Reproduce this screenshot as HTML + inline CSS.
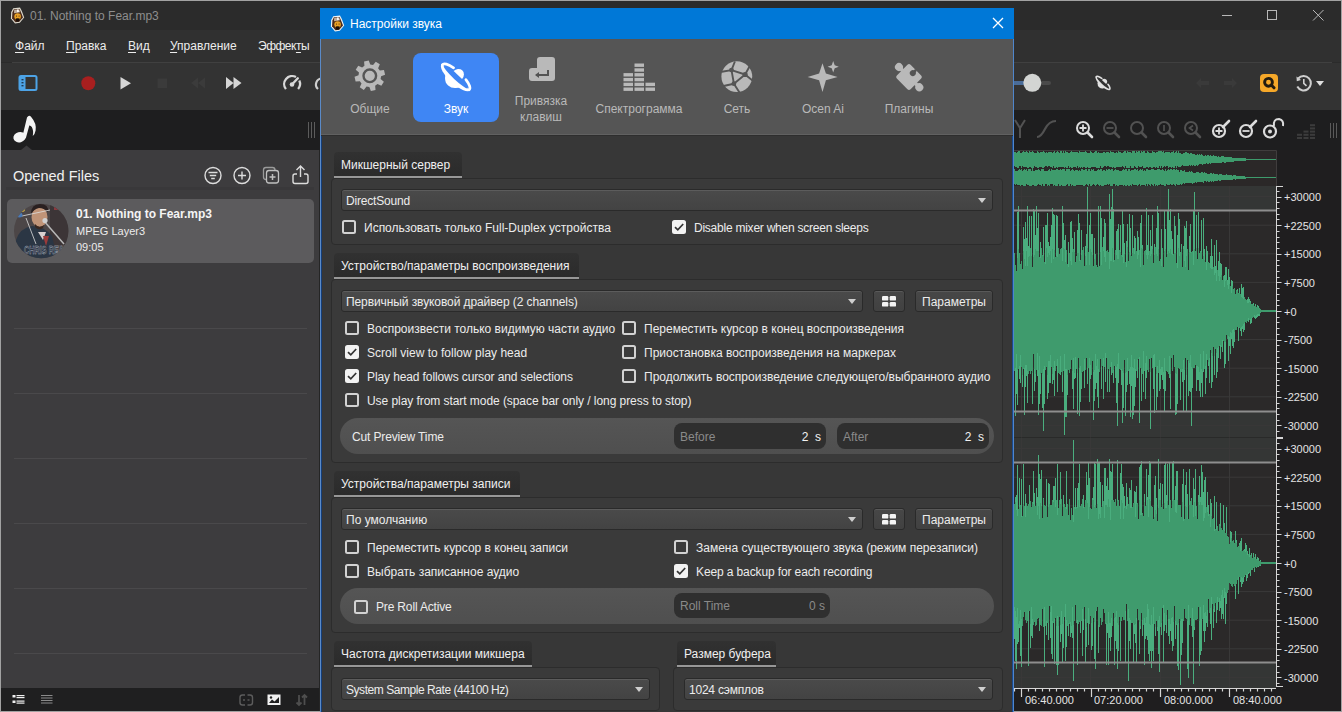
<!DOCTYPE html><html><head><meta charset="utf-8"><style>

*{box-sizing:border-box;margin:0;padding:0}
html,body{width:1342px;height:712px;overflow:hidden;background:#2b2b2b}
body{position:relative;font-family:"Liberation Sans",sans-serif;font-size:12px;color:#e8e8e8}
.a{position:absolute}
.t{position:absolute;white-space:nowrap;line-height:14px}
u{text-decoration:underline;text-underline-offset:2px}


.hd{position:absolute;height:26px;background:linear-gradient(#313131,#2b2b2b);border-radius:4px 4px 0 0;border-bottom:2px solid #979797;white-space:nowrap;color:#f0f0f0;line-height:27px;padding-left:7px}
.gb{position:absolute;background:#3a3a3a;border:1px solid #2c2c2c;border-radius:4px}
.cb{position:absolute;height:22px;background:linear-gradient(#4a4a4a,#434343);border:1px solid #2a2a2a;box-shadow:inset 0 1px 0 #5c5c5c;border-radius:3px;line-height:22px;padding-left:4px;white-space:nowrap;color:#ececec}
.cb:after{content:"";position:absolute;right:6px;top:8px;border-left:4px solid transparent;border-right:4px solid transparent;border-top:5px solid #cfcfcf}
.btn{position:absolute;height:22px;background:linear-gradient(#474747,#414141);border:1px solid #2a2a2a;box-shadow:inset 0 1px 0 #595959;border-radius:3px;line-height:23px;text-align:center;color:#ececec}
.ck{position:absolute;width:14px;height:14px;border:2px solid #d2d2d2;border-radius:2.5px}
.ck.on{background:#f2f2f2;border-color:#f2f2f2}
.ck.on svg{position:absolute;left:-1px;top:-1px}
.lb{position:absolute;white-space:nowrap;line-height:14px;color:#ececec}
.pill{position:absolute;background:linear-gradient(#555555,#4f4f4f);border-radius:18px}
.fld{position:absolute;background:#2f2f2f;border-radius:8px;height:26px;line-height:28px}
.fld .ph{position:absolute;left:6px;top:0;color:#8a8a8a}
.fld .v{position:absolute;right:5px;top:0;color:#f2f2f2}
.tl{position:absolute;white-space:nowrap;line-height:14px;color:#b4b4b4;text-align:center;width:100px}

</style></head><body>
<div class="a" style="left:1px;top:1px;width:1340px;height:29px;background:#2b2b2b"></div>
<svg class="a" style="left:9.5px;top:6.5px" width="15" height="17" viewBox="0 0 15 17"><path d="M3.2 1.2 L10 0.6 L11.8 4 L14.2 10.5 L9.8 15.8 L5 16.4 L0.9 11.6 L1.2 5 Z" fill="#dcd8cc"/><path d="M3.9 2.3 L9.5 1.9 L10.9 5 L13 10.6 L9.2 14.8 L5.4 15.2 L2.1 11.3 L2.4 5.4 Z" fill="#4a2a1a"/><path d="M4.2 2.8 L9.2 2.5 L10.2 5.2 L4 6.2 Z" fill="#bfae9e"/><path d="M7 2.6 L8.6 2.5 L8.8 5 L7.2 5.2 Z" fill="#ffffff"/><ellipse cx="7.6" cy="9.6" rx="3.3" ry="3.3" fill="#e6a026"/><rect x="6" y="8.6" width="1" height="1" fill="#5a3010"/><rect x="8.6" y="8.6" width="1" height="1" fill="#5a3010"/><path d="M5.8 11.6 Q7.6 11 9.6 11.6 L9.2 14.6 L6.4 14.8 Z" fill="#1a0e08"/></svg>
<div class="t" style="left:30px;top:9px;color:#8e8e8e">01. Nothing to Fear.mp3</div>
<svg class="a" style="left:1215px;top:5px" width="115" height="20" viewBox="1215 5 115 20"><path d="M1222 15.5 H1232" stroke="#b8b8b8" stroke-width="1"/><rect x="1267.5" y="10.5" width="9" height="9" fill="none" stroke="#b8b8b8" stroke-width="1"/><path d="M1313 10 L1323.5 20.5 M1323.5 10 L1313 20.5" stroke="#b8b8b8" stroke-width="1"/></svg>
<div class="a" style="left:1px;top:30px;width:1340px;height:32px;background:#303030"></div>
<div class="t" style="left:15px;top:39px;color:#ececec;letter-spacing:0px"><u>Ф</u>айл</div>
<div class="t" style="left:66px;top:39px;color:#ececec;letter-spacing:0px"><u>П</u>равка</div>
<div class="t" style="left:128px;top:39px;color:#ececec;letter-spacing:0px"><u>В</u>ид</div>
<div class="t" style="left:170px;top:39px;color:#ececec;letter-spacing:0px"><u>У</u>правление</div>
<div class="t" style="left:258px;top:39px;color:#ececec;letter-spacing:-0.5px">Эффек<u>т</u>ы</div>
<div class="a" style="left:12px;top:62px;width:1320px;height:1px;background:#404040"></div>
<div class="a" style="left:1px;top:63px;width:1340px;height:47px;background:#333333"></div>
<svg class="a" style="left:0;top:60px" width="330" height="50" viewBox="0 60 330 50"><rect x="19.5" y="76" width="17" height="14" rx="1.5" fill="none" stroke="#4da3e6" stroke-width="2"/><rect x="19.5" y="76" width="6" height="14" fill="#4da3e6"/><rect x="21.5" y="79" width="2" height="1.4" fill="#1d3a55"/><rect x="21.5" y="82" width="2" height="1.4" fill="#1d3a55"/><rect x="21.5" y="85" width="2" height="1.4" fill="#1d3a55"/><circle cx="88.3" cy="83.3" r="7" fill="#a81f1f"/><path d="M120.5 77 L131 83.2 L120.5 89.5 Z" fill="#d6d6d6"/><rect x="157.5" y="78.5" width="9.5" height="9.5" fill="#3b3b3b"/><path d="M205 77.5 L198 83 L205 88.5 Z M198 77.5 L191 83 L198 88.5 Z" fill="#3b3b3b"/><path d="M226 77 L233.5 83 L226 89 Z M233.5 77 L241.5 83 L233.5 89 Z" fill="#d6d6d6"/><path d="M285.9 89.1 A8 8 0 0 1 296 77.1" fill="none" stroke="#d8d8d8" stroke-width="2.3"/><path d="M299.3 80.6 A8 8 0 0 1 298.1 89.1" fill="none" stroke="#d8d8d8" stroke-width="2.3"/><path d="M292 84.5 L297.8 78.3" stroke="#d8d8d8" stroke-width="2.4" stroke-linecap="round"/><circle cx="292" cy="84.5" r="2.3" fill="#d8d8d8"/><path d="M322 78.5 A6 6 0 0 0 318 89" fill="none" stroke="#cfcfcf" stroke-width="2.2"/></svg>
<div class="a" style="left:1px;top:110px;width:1340px;height:40px;background:#1e1e1f"></div>
<svg class="a" style="left:0;top:110px" width="50" height="40" viewBox="0 110 50 40"><ellipse cx="19.6" cy="137.2" rx="6.3" ry="5.1" transform="rotate(-15 19.6 137.2)" fill="#f4f4f4"/><path d="M22.3 137 L27 117.5 Q29 114.5 31.2 117 Q36.8 123.5 35.6 130.5 Q35 134 32.8 136 Q33.8 130.5 31.8 127 Q30.6 125.2 29.3 125.5 L25.9 138 Z" fill="#f4f4f4"/></svg>
<svg class="a" style="left:21px;top:145px" width="11" height="5" viewBox="0 0 11 5"><path d="M0 5 L5.5 0.5 L11 5 Z" fill="#3d3c3e"/></svg>
<svg class="a" style="left:306px;top:122px" width="12" height="17" viewBox="0 0 12 17"><path d="M2.5 0 V16 M5.5 0 V16 M8.5 0 V16" stroke="#5c5c5c" stroke-width="1"/></svg>
<div class="a" style="left:1px;top:150px;width:318px;height:538px;background:#3d3c3e"></div>
<div class="a" style="left:319px;top:150px;width:1px;height:561px;background:#252525"></div>
<div class="t" style="left:13px;top:167px;font-size:14.5px;line-height:18px;color:#f0f0f0">Opened Files</div>
<div class="a" style="left:6px;top:187px;width:308px;height:3px;background:#39383a"></div>
<svg class="a" style="left:195px;top:160px" width="125" height="30" viewBox="195 160 125 30"><circle cx="213" cy="175.5" r="8" fill="none" stroke="#dcdcdc" stroke-width="1.4"/><path d="M208.5 172.5 H217.5 M209.8 175.5 H216.2 M211.2 178.5 H214.8" stroke="#dcdcdc" stroke-width="1.3"/><circle cx="242" cy="175.5" r="8" fill="none" stroke="#dcdcdc" stroke-width="1.4"/><path d="M238 175.5 H246 M242 171.5 V179.5" stroke="#dcdcdc" stroke-width="1.4"/><rect x="263.5" y="167.5" width="11.5" height="12" rx="2.5" fill="none" stroke="#9a9a9a" stroke-width="1.3"/><rect x="266.5" y="170.5" width="12" height="12.5" rx="2.5" fill="#3d3c3e" stroke="#c0c0c0" stroke-width="1.3"/><path d="M269.5 177 H275.5 M272.5 174 V180" stroke="#c0c0c0" stroke-width="1.5"/><path d="M297 174 H295 Q293 174 293 176 V181.5 Q293 183.5 295 183.5 H306 Q308 183.5 308 181.5 V176 Q308 174 306 174 H304" fill="none" stroke="#dcdcdc" stroke-width="1.4"/><path d="M300.5 177 V166.5 M296.5 170 L300.5 166 L304.5 170" fill="none" stroke="#dcdcdc" stroke-width="1.4"/></svg>
<div class="a" style="left:7px;top:199px;width:307px;height:64px;background:#5c5b5d;border-radius:5px"></div>
<svg class="a" style="left:0;top:190px" width="80" height="80" viewBox="0 190 80 80"><defs><clipPath id="av"><circle cx="41.2" cy="231" r="27.2"/></clipPath></defs><g clip-path="url(#av)"><rect x="0" y="190" width="80" height="80" fill="#4c4647"/><rect x="50" y="200" width="30" height="45" fill="#3c3537"/><path d="M14 262 L16 240 Q20 228 32 226 Q44 226 52 236 L58 262 Z" fill="#2b3644"/><path d="M38 232 L43 240 L46 232 Z" fill="#d8d0d0"/><path d="M43 236 L46 246 L49 236 Z" fill="#9a3a3a"/><ellipse cx="39.5" cy="217" rx="8" ry="10" fill="#c09478"/><path d="M31 214 Q31 204 40 204 Q49 204 48 212 Q44 208 39 208 Q34 209 31 214 Z" fill="#2a2020"/><path d="M35 224 Q39 229 44 225 L43 228 Q39 231 35 227 Z" fill="#3a2820"/><path d="M44 221 L64 244" stroke="#b8b8b8" stroke-width="1.5"/><circle cx="45" cy="220.5" r="2.6" fill="#d0d0d0"/><path d="M22 216 L50 210 M26 218 L36 244" stroke="#e0e0e0" stroke-width="0.8"/><ellipse cx="21.5" cy="209.5" rx="3.5" ry="2.5" fill="#d8b440"/><ellipse cx="19.5" cy="215" rx="3" ry="2.5" fill="#4a7ab8"/><rect x="54" y="207" width="5" height="3" fill="#8a3a40"/><text x="24" y="253.5" font-family="Liberation Sans" font-size="10" font-weight="bold" fill="#2c3440" stroke="#b0b8c4" stroke-width="0.35" textLength="40" lengthAdjust="spacingAndGlyphs">CHRIS REA</text></g></svg>
<div class="t" style="left:76px;top:207px;font-weight:bold;color:#f4f4f4">01. Nothing to Fear.mp3</div>
<div class="t" style="left:76px;top:224px;font-size:11px;color:#ececec">MPEG Layer3</div>
<div class="t" style="left:76px;top:240px;font-size:11px;color:#ececec">09:05</div>
<div class="a" style="left:14px;top:328px;width:293px;height:1px;background:#4a494b"></div>
<div class="a" style="left:14px;top:393px;width:293px;height:1px;background:#4a494b"></div>
<div class="a" style="left:14px;top:458px;width:293px;height:1px;background:#4a494b"></div>
<div class="a" style="left:14px;top:523px;width:293px;height:1px;background:#4a494b"></div>
<div class="a" style="left:14px;top:588px;width:293px;height:1px;background:#4a494b"></div>
<div class="a" style="left:14px;top:653px;width:293px;height:1px;background:#4a494b"></div>
<div class="a" style="left:1px;top:688px;width:318px;height:23px;background:#1f1f20"></div>
<svg class="a" style="left:0;top:688px" width="320" height="23" viewBox="0 688 320 23"><rect x="12.5" y="695" width="3" height="2.5" fill="#f0f0f0"/><rect x="12.5" y="700.5" width="3" height="2.5" fill="#f0f0f0"/><rect x="16.5" y="695" width="8" height="1.2" fill="#f0f0f0"/><rect x="16.5" y="697" width="8" height="1.2" fill="#f0f0f0"/><rect x="16.5" y="700.5" width="8" height="1.2" fill="#f0f0f0"/><rect x="16.5" y="702.5" width="8" height="1.2" fill="#f0f0f0"/><path d="M41 695.5 H52.5 M41 698 H52.5 M41 700.5 H52.5 M41 703 H52.5" stroke="#8a8a8a" stroke-width="1"/><rect x="240" y="695" width="12.5" height="10" rx="2.5" fill="none" stroke="#5c5c5c" stroke-width="1.4"/><path d="M243 700 H249.5" stroke="#5c5c5c" stroke-width="1.4"/><rect x="245" y="694" width="2.5" height="12" fill="#1f1f20"/><rect x="267.5" y="694.5" width="13" height="10.5" fill="#f0f0f0"/><path d="M269 703 L272 699.5 L274.5 701.5 L279 697 V703 Z" fill="#1f1f20"/><circle cx="271" cy="697.5" r="1.2" fill="#1f1f20"/><path d="M299 695 V705 M296.5 702.5 L299 705 L301.5 702.5 M304.5 705 V695 M302 697.5 L304.5 695 L307 697.5" fill="none" stroke="#4e4e4e" stroke-width="1.8"/></svg>
<svg class="a" style="left:1014px;top:62px" width="328" height="88" viewBox="1014 62 328 88"><rect x="1014" y="81" width="18" height="4" fill="#4a6c98"/><rect x="1040" y="81" width="11" height="4" rx="2" fill="#4a4a4a"/><circle cx="1032.3" cy="82.8" r="9" fill="#d3d5d3"/><path d="M1196 83 L1201 78 V81 H1209 V85 H1201 V88 Z" fill="#3a3a3a"/><path d="M1237 83 L1232 78 V81 H1224 V85 H1232 V88 Z" fill="#3a3a3a"/><rect x="1260" y="74" width="18" height="18" rx="4" fill="#f6a829"/><circle cx="1268.5" cy="82.3" r="3.9" fill="none" stroke="#231c10" stroke-width="2.9"/><path d="M1271.5 85.3 L1274 87.8" stroke="#231c10" stroke-width="3" stroke-linecap="round"/><path d="M1298.2 78.5 A7.2 7.2 0 1 1 1297.3 86.5" fill="none" stroke="#cfcfcf" stroke-width="2"/><path d="M1296.5 76.5 L1296.8 81.3 L1301 80 Z" fill="#cfcfcf"/><path d="M1303.8 79 V83.3 L1306.5 85.8" fill="none" stroke="#cfcfcf" stroke-width="1.6"/><path d="M1316 81 H1324 L1320 86 Z" fill="#e0e0e0"/></svg>
<svg class="a" style="left:1093px;top:72.7px" width="20" height="20" viewBox="-20 -20 40 40"><g transform="rotate(43)"><path d="M-19.6 0 A19.6 7 0 0 0 19.6 0 Z" fill="#e2e2e2"/><path d="M-10.5 0 A10.5 11.5 0 0 0 10.5 0 Z" fill="#e2e2e2"/><path d="M-18.3 0.3 A18.3 5.6 0 0 1 -8 -5.04" fill="none" stroke="#e2e2e2" stroke-width="3.2" stroke-linecap="round"/><path d="M9 -4.88 A18.3 5.6 0 0 1 18.3 0.3" fill="none" stroke="#e2e2e2" stroke-width="3.2" stroke-linecap="round"/><ellipse cx="0" cy="0.3" rx="16.3" ry="2.2" fill="#333333"/><path d="M-5.8 -2.9 A5.8 6.4 0 0 1 5.8 -2.9 Z" fill="#e2e2e2"/></g></svg>
<svg class="a" style="left:1014px;top:110px" width="328" height="40" viewBox="1014 110 328 40"><path d="M1015 120 L1020 128 L1025 120 M1020 128 V138" fill="none" stroke="#525252" stroke-width="2"/><path d="M1037 137 Q1041 137 1045 129 Q1049 121 1056 121" fill="none" stroke="#525252" stroke-width="2.2"/><circle cx="1083" cy="128" r="6" fill="none" stroke="#dcdcdc" stroke-width="2"/><path d="M1087.5 132.5 L1092 137" stroke="#dcdcdc" stroke-width="2.6" stroke-linecap="round"/><path d="M1079.5 128 H1086.5 M1083 124.5 V131.5" stroke="#dcdcdc" stroke-width="1.8"/><circle cx="1110" cy="128" r="6" fill="none" stroke="#525252" stroke-width="2"/><path d="M1114.5 132.5 L1119 137" stroke="#525252" stroke-width="2.6" stroke-linecap="round"/><path d="M1106.5 128 H1113.5" stroke="#525252" stroke-width="1.8"/><circle cx="1137" cy="128" r="6" fill="none" stroke="#525252" stroke-width="2"/><path d="M1141.5 132.5 L1146 137" stroke="#525252" stroke-width="2.6" stroke-linecap="round"/><circle cx="1164" cy="128" r="6" fill="none" stroke="#525252" stroke-width="2"/><path d="M1168.5 132.5 L1173 137" stroke="#525252" stroke-width="2.6" stroke-linecap="round"/><path d="M1164 125 V131" stroke="#525252" stroke-width="1.6"/><circle cx="1191" cy="128" r="6" fill="none" stroke="#525252" stroke-width="2"/><path d="M1195.5 132.5 L1200 137" stroke="#525252" stroke-width="2.6" stroke-linecap="round"/><path d="M1193 125.5 L1189.5 128 L1193 130.5" fill="none" stroke="#525252" stroke-width="1.6"/><circle cx="1219" cy="131" r="6" fill="none" stroke="#dcdcdc" stroke-width="2.2"/><path d="M1223 127 L1229 121" stroke="#dcdcdc" stroke-width="2.6" stroke-linecap="round"/><path d="M1215.5 131 H1222.5 M1219 127.5 V134.5" stroke="#dcdcdc" stroke-width="1.8"/><circle cx="1246" cy="131" r="6" fill="none" stroke="#dcdcdc" stroke-width="2.2"/><path d="M1250 127 L1256 121" stroke="#dcdcdc" stroke-width="2.6" stroke-linecap="round"/><path d="M1242.5 131 H1249.5" stroke="#dcdcdc" stroke-width="1.8"/><circle cx="1270" cy="131.5" r="6" fill="none" stroke="#dcdcdc" stroke-width="2.2"/><circle cx="1270" cy="131.5" r="2" fill="#dcdcdc"/><path d="M1274 126 Q1273 119 1279 119 Q1284 120 1283 126" fill="none" stroke="#dcdcdc" stroke-width="2"/><rect x="1297.0" y="137.0" width="5" height="2" fill="#3c3c3c"/><rect x="1297.0" y="133.8" width="5" height="2" fill="#3c3c3c"/><rect x="1303.5" y="137.0" width="5" height="2" fill="#3c3c3c"/><rect x="1303.5" y="133.8" width="5" height="2" fill="#3c3c3c"/><rect x="1303.5" y="130.6" width="5" height="2" fill="#3c3c3c"/><rect x="1310.0" y="137.0" width="5" height="2" fill="#3c3c3c"/><rect x="1310.0" y="133.8" width="5" height="2" fill="#3c3c3c"/><rect x="1310.0" y="130.6" width="5" height="2" fill="#3c3c3c"/><rect x="1310.0" y="127.4" width="5" height="2" fill="#3c3c3c"/><rect x="1310.0" y="124.2" width="5" height="2" fill="#3c3c3c"/><path d="M1330.5 123 V138 M1333.5 123 V138 M1336.5 123 V138" stroke="#5a5a5a" stroke-width="1"/></svg>
<div class="a" style="left:1014px;top:150px;width:327px;height:561px;background:#1f1e1f"></div>
<svg class="a" style="left:1014px;top:150px" width="327" height="561" viewBox="1014 150 327 561"><rect x="1014" y="150" width="262" height="36" fill="#2b2828"/><path d="M1014 150.5 H1276.5 V186" fill="none" stroke="#403d3d" stroke-width="1"/><path d="M1014.5 152.2V166.4M1014.5 169.4V184.2M1015.5 151.7V166.9M1015.5 170.9V185.3M1016.5 152.9V167.1M1016.5 170.8V184.2M1017.5 151.9V168.1M1017.5 170.7V184.6M1018.5 151.4V168.4M1018.5 169.6V185.0M1019.5 150.6V166.1M1019.5 168.9V184.7M1020.5 152.6V166.3M1020.5 170.2V186.0M1021.5 152.5V167.5M1021.5 169.4V184.9M1022.5 151.6V166.2M1022.5 170.9V184.5M1023.5 151.3V167.1M1023.5 170.2V185.5M1024.5 151.9V166.7M1024.5 169.0V185.7M1025.5 152.4V167.4M1025.5 169.7V186.2M1026.5 151.2V166.7M1026.5 168.5V184.3M1027.5 152.0V167.9M1027.5 170.6V185.2M1028.5 152.9V167.7M1028.5 169.1V185.4M1029.5 150.8V166.8M1029.5 169.3V185.5M1030.5 151.6V167.1M1030.5 168.9V186.4M1031.5 151.8V167.7M1031.5 170.8V185.8M1032.5 151.4V168.5M1032.5 168.9V184.7M1033.5 152.0V167.7M1033.5 170.9V185.2M1034.5 152.6V166.3M1034.5 170.9V185.9M1035.5 152.7V166.6M1035.5 170.0V186.2M1036.5 152.8V167.1M1036.5 169.6V186.2M1037.5 151.0V168.2M1037.5 170.3V185.0M1038.5 152.1V168.2M1038.5 168.6V184.4M1039.5 152.6V166.6M1039.5 170.4V185.2M1040.5 151.5V166.7M1040.5 171.0V185.0M1041.5 152.1V167.4M1041.5 168.6V185.7M1042.5 151.7V167.5M1042.5 169.3V184.1M1043.5 150.8V167.9M1043.5 168.8V186.0M1044.5 152.0V167.0M1044.5 170.7V185.6M1045.5 152.8V166.2M1045.5 170.5V184.4M1046.5 152.1V166.1M1046.5 171.0V184.4M1047.5 152.7V166.9M1047.5 170.9V186.2M1048.5 151.5V166.4M1048.5 170.4V184.9M1049.5 152.1V166.3M1049.5 168.9V186.5M1050.5 151.8V167.2M1050.5 170.8V184.3M1051.5 152.1V166.7M1051.5 168.9V184.4M1052.5 152.9V168.4M1052.5 169.7V184.4M1053.5 151.6V166.1M1053.5 169.7V186.4M1054.5 150.8V167.7M1054.5 170.3V184.9M1055.5 152.6V167.9M1055.5 169.7V185.9M1056.5 152.2V166.6M1056.5 169.0V186.5M1057.5 150.9V168.0M1057.5 169.0V185.8M1058.5 152.4V167.3M1058.5 170.1V184.1M1059.5 152.9V166.7M1059.5 170.4V185.7M1060.5 150.6V167.1M1060.5 168.7V186.5M1061.5 150.6V166.9M1061.5 170.4V184.6M1062.5 152.5V166.5M1062.5 169.4V186.3M1063.5 150.9V167.2M1063.5 169.4V186.0M1064.5 152.8V167.7M1064.5 168.7V186.0M1065.5 151.1V167.2M1065.5 170.6V186.0M1066.5 152.2V168.0M1066.5 168.6V185.0M1067.5 152.0V168.4M1067.5 169.2V184.4M1068.5 152.7V166.4M1068.5 168.7V186.0M1069.5 152.6V168.1M1069.5 168.5V185.6M1070.5 152.1V167.4M1070.5 170.7V184.0M1071.5 150.6V167.6M1071.5 169.7V186.3M1072.5 151.9V168.2M1072.5 168.9V184.5M1073.5 152.4V166.7M1073.5 170.4V185.5M1074.5 152.4V167.0M1074.5 170.7V186.3M1075.5 152.1V167.1M1075.5 169.5V186.3M1076.5 151.9V168.3M1076.5 169.7V185.3M1077.5 151.7V166.0M1077.5 169.9V184.5M1078.5 153.0V168.0M1078.5 170.6V185.2M1079.5 151.2V167.4M1079.5 170.2V185.3M1080.5 151.6V168.0M1080.5 170.7V185.4M1081.5 152.4V166.7M1081.5 169.1V185.3M1082.5 151.6V167.9M1082.5 168.7V185.1M1083.5 151.5V167.3M1083.5 169.7V185.7M1084.5 151.9V167.3M1084.5 169.8V186.4M1085.5 151.3V168.2M1085.5 168.6V184.6M1086.5 151.6V168.4M1086.5 168.9V184.3M1087.5 152.7V167.1M1087.5 170.8V184.6M1088.5 152.8V167.7M1088.5 169.0V186.2M1089.5 152.6V167.8M1089.5 169.3V184.4M1090.5 150.8V168.4M1090.5 170.5V186.4M1091.5 152.0V167.2M1091.5 168.5V186.1M1092.5 152.6V167.1M1092.5 169.7V184.8M1093.5 152.5V166.8M1093.5 169.2V184.0M1094.5 151.6V167.1M1094.5 171.0V184.8M1095.5 151.4V167.3M1095.5 170.8V186.5M1096.5 151.0V168.4M1096.5 170.7V184.7M1097.5 152.9V167.9M1097.5 170.3V184.3M1098.5 151.9V168.3M1098.5 169.0V184.6M1099.5 152.6V168.3M1099.5 169.6V185.8M1100.5 152.8V166.1M1100.5 169.3V185.1M1101.5 152.8V168.3M1101.5 169.4V186.0M1102.5 152.8V168.1M1102.5 170.8V186.2M1103.5 151.9V166.8M1103.5 169.6V186.3M1104.5 152.3V166.3M1104.5 169.7V184.6M1105.5 152.7V166.4M1105.5 170.9V184.5M1106.5 152.2V166.8M1106.5 169.1V184.7M1107.5 151.7V166.4M1107.5 170.1V184.0M1108.5 152.4V166.0M1108.5 169.2V185.4M1109.5 152.5V167.2M1109.5 168.7V184.3M1110.5 151.0V167.1M1110.5 169.8V186.1M1111.5 152.0V167.3M1111.5 169.3V186.5M1112.5 152.1V168.1M1112.5 169.2V185.6M1113.5 152.0V166.9M1113.5 170.9V184.3M1114.5 152.8V167.9M1114.5 170.4V184.4M1115.5 152.8V168.1M1115.5 168.8V185.7M1116.5 152.3V166.6M1116.5 170.3V185.1M1117.5 152.6V167.1M1117.5 170.3V186.4M1118.5 150.6V167.4M1118.5 170.4V186.4M1119.5 152.2V166.9M1119.5 171.0V185.0M1120.5 151.8V167.3M1120.5 170.5V185.3M1121.5 153.0V166.7M1121.5 170.8V185.0M1122.5 152.9V166.1M1122.5 170.2V184.6M1123.5 151.5V167.3M1123.5 169.1V185.6M1124.5 151.2V168.2M1124.5 170.0V184.8M1125.5 150.5V166.4M1125.5 169.2V185.6M1126.5 152.9V168.1M1126.5 168.8V185.6M1127.5 151.2V168.0M1127.5 170.7V185.3M1128.5 151.7V168.1M1128.5 169.0V186.1M1129.5 151.5V168.2M1129.5 169.3V185.7M1130.5 152.4V166.1M1130.5 170.7V184.9M1131.5 152.7V168.1M1131.5 169.6V185.6M1132.5 151.4V167.7M1132.5 169.8V184.0M1133.5 151.0V167.9M1133.5 169.7V185.3M1134.5 151.4V166.2M1134.5 169.2V184.6M1135.5 152.8V166.7M1135.5 169.2V184.5M1136.5 151.2V168.4M1136.5 169.8V185.0M1137.5 151.8V167.7M1137.5 169.1V185.5M1138.5 151.4V166.2M1138.5 170.6V184.6M1139.5 151.1V166.8M1139.5 169.6V184.0M1140.5 152.8V166.7M1140.5 169.3V185.7M1141.5 151.3V166.7M1141.5 169.7V185.2M1142.5 151.8V166.3M1142.5 168.8V184.5M1143.5 150.6V168.3M1143.5 171.0V185.1M1144.5 151.0V168.4M1144.5 169.9V184.7M1145.5 152.5V168.4M1145.5 170.5V185.5M1146.5 152.6V167.3M1146.5 168.6V184.3M1147.5 150.9V167.3M1147.5 168.8V185.8M1148.5 152.4V168.2M1148.5 169.8V184.1M1149.5 153.0V167.2M1149.5 169.9V184.8M1150.5 152.6V166.9M1150.5 170.2V186.1M1151.5 153.0V167.9M1151.5 168.9V184.3M1152.5 150.7V167.8M1152.5 168.7V184.7M1153.5 152.1V167.0M1153.5 168.5V185.5M1154.5 152.1V167.1M1154.5 170.3V184.1M1155.5 152.7V168.1M1155.5 170.3V186.3M1156.5 152.4V166.7M1156.5 169.7V184.5M1157.5 152.1V168.4M1157.5 168.8V186.0M1158.5 151.4V168.3M1158.5 168.6V185.4M1159.5 151.2V166.1M1159.5 169.2V185.1M1160.5 151.1V167.6M1160.5 170.3V184.1M1161.5 150.7V166.3M1161.5 169.8V184.9M1162.5 152.3V167.8M1162.5 168.6V184.7M1163.5 151.4V166.8M1163.5 169.6V185.0M1164.5 152.6V166.4M1164.5 170.5V186.3M1165.5 151.8V166.6M1165.5 168.7V186.5M1166.5 151.9V166.3M1166.5 170.5V184.2M1167.5 152.1V166.2M1167.5 170.4V184.6M1168.5 151.6V168.2M1168.5 169.1V185.0M1169.5 152.0V167.3M1169.5 170.1V184.8M1170.5 152.8V166.7M1170.5 168.6V184.3M1171.5 151.7V167.6M1171.5 168.8V184.5M1172.5 152.3V166.6M1172.5 170.0V185.1M1173.5 150.6V168.1M1173.5 168.8V184.1M1174.5 152.9V167.8M1174.5 168.8V185.2M1175.5 151.5V166.0M1175.5 170.0V186.3M1176.5 151.2V167.9M1176.5 168.8V184.4M1177.5 153.1V166.0M1177.5 170.1V185.3M1178.5 151.3V167.2M1178.5 169.9V185.3M1179.5 152.5V166.7M1179.5 171.5V185.2M1180.5 153.1V167.4M1180.5 170.2V184.0M1181.5 153.5V165.8M1181.5 170.4V184.8M1182.5 153.6V165.3M1182.5 170.7V184.4M1183.5 153.1V165.5M1183.5 170.7V183.0M1184.5 153.4V165.9M1184.5 170.1V184.3M1185.5 152.4V165.8M1185.5 171.7V183.3M1186.5 152.3V166.2M1186.5 171.6V182.8M1187.5 153.4V166.0M1187.5 171.5V183.2M1188.5 153.1V166.4M1188.5 172.0V182.6M1189.5 153.9V165.3M1189.5 171.2V182.9M1190.5 153.1V165.8M1190.5 171.7V182.8M1191.5 152.9V164.9M1191.5 171.2V182.7M1192.5 154.4V165.6M1192.5 172.2V183.9M1193.5 154.0V164.5M1193.5 172.5V182.9M1194.5 153.8V165.7M1194.5 172.7V182.7M1195.5 154.7V165.6M1195.5 172.8V182.1M1196.5 155.0V164.6M1196.5 171.6V183.4M1197.5 154.0V165.5M1197.5 171.6V182.4M1198.5 155.0V165.3M1198.5 172.1V181.8M1199.5 154.3V164.3M1199.5 172.8V182.2M1200.5 155.2V163.6M1200.5 173.0V182.1M1201.5 154.0V163.7M1201.5 172.0V181.8M1202.5 155.0V164.7M1202.5 172.3V182.1M1203.5 155.6V164.0M1203.5 173.1V182.7M1204.5 155.5V163.8M1204.5 172.4V181.3M1205.5 155.2V164.3M1205.5 172.7V181.3M1206.5 155.8V163.2M1206.5 172.6V181.5M1207.5 154.9V164.3M1207.5 173.5V181.4M1208.5 154.7V163.8M1208.5 173.7V181.9M1209.5 155.7V163.3M1209.5 174.1V181.9M1210.5 155.0V163.6M1210.5 173.0V180.9M1211.5 156.0V163.3M1211.5 173.0V181.9M1212.5 155.8V163.0M1212.5 173.8V181.3M1213.5 155.3V162.8M1213.5 173.4V181.5M1214.5 155.5V163.4M1214.5 173.8V180.9M1215.5 156.2V162.9M1215.5 173.6V180.6M1216.5 156.4V163.2M1216.5 174.3V180.5M1217.5 156.6V162.9M1217.5 174.3V181.4M1218.5 155.8V163.3M1218.5 174.5V180.3M1219.5 156.7V162.7M1219.5 174.1V180.6M1220.5 156.6V162.5M1220.5 174.3V180.8M1221.5 156.2V162.9M1221.5 174.3V180.2M1222.5 156.2V162.3M1222.5 174.5V180.3M1223.5 156.4V162.1M1223.5 174.9V180.1M1224.5 157.0V162.6M1224.5 174.6V180.1M1225.5 156.9V162.6M1225.5 174.8V180.0M1226.5 156.6V162.3M1226.5 174.4V179.8M1227.5 157.0V162.3M1227.5 174.7V180.4M1228.5 157.4V161.8M1228.5 175.3V179.7M1229.5 156.7V162.0M1229.5 174.8V179.8M1230.5 156.9V161.8M1230.5 175.4V180.0M1231.5 156.9V161.5M1231.5 175.2V179.8M1232.5 157.5V161.6M1232.5 175.6V179.5M1233.5 157.6V161.6M1233.5 175.3V179.4M1234.5 157.8V161.4M1234.5 175.4V179.3M1235.5 157.7V161.2M1235.5 175.4V179.5M1236.5 157.9V161.1M1236.5 175.7V179.4M1237.5 157.7V161.0M1237.5 175.9V179.4M1238.5 157.9V161.1M1238.5 175.9V179.4M1239.5 158.0V161.2M1239.5 176.0V179.1M1240.5 157.8V161.3M1240.5 176.0V178.9M1241.5 157.9V160.8M1241.5 176.3V179.2M1242.5 158.1V161.0M1242.5 176.2V179.1M1243.5 158.2V160.7M1243.5 176.4V178.8M1244.5 158.2V160.9M1244.5 176.4V178.8M1245.5 158.4V160.7M1245.5 176.5V178.6M1246.5 158.6V160.4M1246.5 176.6V178.4M1247.5 158.6V160.4M1247.5 176.6V178.4M1248.5 158.6V160.4M1248.5 176.6V178.4M1249.5 158.6V160.4M1249.5 176.6V178.4M1250.5 158.6V160.4M1250.5 176.6V178.4M1251.5 158.6V160.4M1251.5 176.6V178.4M1252.5 158.6V160.4M1252.5 176.6V178.4M1253.5 158.6V160.4M1253.5 176.6V178.4M1254.5 158.6V160.4M1254.5 176.6V178.4M1255.5 158.6V160.4M1255.5 176.6V178.4M1256.5 158.6V160.4M1256.5 176.6V178.4M1257.5 158.6V160.4M1257.5 176.6V178.4M1258.5 158.6V160.4M1258.5 176.6V178.4M1259.5 158.6V160.4M1259.5 176.6V178.4M1260.5 158.6V160.4M1260.5 176.6V178.4M1261.5 158.6V160.4M1261.5 176.6V178.4M1262.5 158.6V160.4M1262.5 176.6V178.4M1263.5 158.6V160.4M1263.5 176.6V178.4M1264.5 158.6V160.4M1264.5 176.6V178.4M1265.5 158.6V160.4M1265.5 176.6V178.4M1266.5 158.6V160.4M1266.5 176.6V178.4M1267.5 158.6V160.4M1267.5 176.6V178.4M1268.5 158.6V160.4M1268.5 176.6V178.4M1269.5 158.6V160.4M1269.5 176.6V178.4M1270.5 158.6V160.4M1270.5 176.6V178.4M1271.5 158.6V160.4M1271.5 176.6V178.4M1272.5 158.6V160.4M1272.5 176.6V178.4M1273.5 158.6V160.4M1273.5 176.6V178.4M1274.5 158.6V160.4M1274.5 176.6V178.4M1275.5 158.6V160.4M1275.5 176.6V178.4" stroke="#3e9b6c" stroke-width="1" shape-rendering="crispEdges"/><rect x="1014" y="186" width="262" height="251.5" fill="#343635"/><rect x="1014" y="210.5" width="262" height="201.0" fill="#2b2929"/><path d="M1014 196.6H1276" stroke="#3a3939" stroke-width="1"/><path d="M1014 225.2H1276" stroke="#3a3939" stroke-width="1"/><path d="M1014 253.8H1276" stroke="#3a3939" stroke-width="1"/><path d="M1014 282.4H1276" stroke="#3a3939" stroke-width="1"/><path d="M1014 311.0H1276" stroke="#3a3939" stroke-width="1"/><path d="M1014 339.6H1276" stroke="#3a3939" stroke-width="1"/><path d="M1014 368.2H1276" stroke="#3a3939" stroke-width="1"/><path d="M1014 396.8H1276" stroke="#3a3939" stroke-width="1"/><path d="M1014 425.4H1276" stroke="#3a3939" stroke-width="1"/><path d="M1021.5 186V437.5" stroke="#393838" stroke-width="1"/><path d="M1090.5 186V437.5" stroke="#393838" stroke-width="1"/><path d="M1160.5 186V437.5" stroke="#393838" stroke-width="1"/><path d="M1229.5 186V437.5" stroke="#393838" stroke-width="1"/><rect x="1014" y="438" width="262" height="250" fill="#343635"/><rect x="1014" y="462.5" width="262" height="200.0" fill="#2b2929"/><path d="M1014 448.6H1276" stroke="#3a3939" stroke-width="1"/><path d="M1014 477.2H1276" stroke="#3a3939" stroke-width="1"/><path d="M1014 505.8H1276" stroke="#3a3939" stroke-width="1"/><path d="M1014 534.4H1276" stroke="#3a3939" stroke-width="1"/><path d="M1014 563.0H1276" stroke="#3a3939" stroke-width="1"/><path d="M1014 591.6H1276" stroke="#3a3939" stroke-width="1"/><path d="M1014 620.2H1276" stroke="#3a3939" stroke-width="1"/><path d="M1014 648.8H1276" stroke="#3a3939" stroke-width="1"/><path d="M1014 677.4H1276" stroke="#3a3939" stroke-width="1"/><path d="M1021.5 438V688" stroke="#393838" stroke-width="1"/><path d="M1090.5 438V688" stroke="#393838" stroke-width="1"/><path d="M1160.5 438V688" stroke="#393838" stroke-width="1"/><path d="M1229.5 438V688" stroke="#393838" stroke-width="1"/><path d="M1015.5 366.0V416.3M1016.5 352.0V393.5M1017.5 211.7V260.3M1017.5 367.6V404.7M1018.5 205.8V251.3M1019.5 363.7V378.7M1020.5 353.2V383.0M1022.5 372.9V387.4M1023.5 226.7V253.0M1024.5 238.7V261.3M1024.5 365.5V414.9M1025.5 221.9V268.1M1025.5 362.7V387.3M1026.5 238.4V253.4M1026.5 362.6V375.7M1027.5 205.8V268.3M1027.5 368.7V402.6M1028.5 246.1V258.8M1029.5 216.0V258.2M1031.5 216.4V258.2M1032.5 370.5V404.3M1033.5 209.0V258.9M1034.5 210.0V257.0M1034.5 367.3V391.1M1035.5 235.4V250.6M1035.5 371.5V382.1M1036.5 205.8V252.7M1037.5 227.9V253.3M1037.5 351.3V376.0M1038.5 213.1V252.7M1038.5 367.5V415.3M1039.5 353.7V404.3M1040.5 241.5V259.8M1040.5 372.1V394.0M1042.5 372.0V408.2M1043.5 226.5V258.2M1043.5 367.4V431.0M1044.5 364.4V404.0M1045.5 225.0V266.4M1046.5 225.0V250.0M1047.5 213.4V258.7M1047.5 372.7V398.6M1048.5 241.7V254.9M1048.5 359.3V393.2M1049.5 246.0V257.1M1049.5 359.4V383.2M1050.5 236.5V252.8M1050.5 352.9V383.3M1051.5 224.8V264.7M1052.5 208.2V250.9M1052.5 372.0V384.2M1053.5 213.8V261.2M1053.5 365.6V380.3M1054.5 215.2V252.2M1054.5 359.2V396.1M1056.5 214.9V258.0M1057.5 215.9V258.9M1057.5 357.1V392.0M1060.5 353.8V375.4M1062.5 206.1V262.9M1062.5 372.8V391.9M1063.5 223.1V249.9M1064.5 239.9V251.4M1064.5 352.1V434.6M1065.5 235.1V263.9M1065.5 366.7V417.1M1066.5 366.9V416.5M1067.5 372.7V394.7M1068.5 241.8V269.2M1070.5 222.1V263.4M1071.5 220.8V267.0M1072.5 238.2V253.5M1072.5 369.3V389.4M1073.5 356.2V409.0M1074.5 231.5V253.5M1074.5 370.5V379.1M1075.5 354.8V378.4M1077.5 230.2V254.6M1077.5 371.0V414.3M1078.5 213.5V255.4M1079.5 223.2V262.9M1079.5 365.8V415.6M1080.5 363.8V401.6M1081.5 230.4V256.8M1081.5 370.7V389.2M1084.5 357.2V388.0M1085.5 245.5V258.4M1086.5 233.9V267.3M1087.5 187.3V249.9M1087.5 366.4V384.3M1089.5 225.3V266.9M1089.5 356.3V401.8M1090.5 212.5V251.3M1090.5 363.0V378.5M1091.5 234.2V254.3M1092.5 233.9V256.9M1093.5 369.9V420.4M1094.5 238.3V261.2M1094.5 367.6V400.9M1095.5 352.4V388.8M1096.5 363.9V382.6M1097.5 356.7V396.5M1098.5 205.8V268.3M1098.5 367.1V408.2M1100.5 205.6V253.5M1101.5 217.7V267.4M1101.5 365.0V388.8M1103.5 236.9V253.0M1103.5 356.2V399.1M1104.5 219.3V258.7M1105.5 223.1V264.0M1105.5 351.1V382.3M1107.5 367.9V392.2M1109.5 193.6V270.9M1109.5 368.9V391.7M1110.5 219.0V263.4M1111.5 207.1V262.9M1111.5 359.5V375.0M1112.5 188.5V250.0M1113.5 209.3V264.3M1113.5 367.7V383.2M1115.5 364.3V378.3M1116.5 231.4V257.2M1116.5 365.4V402.8M1117.5 228.5V261.4M1117.5 361.6V426.0M1118.5 224.0V261.3M1118.5 350.8V382.8M1120.5 225.1V253.8M1121.5 367.4V384.9M1122.5 210.3V258.6M1122.5 369.0V423.4M1123.5 224.2V264.5M1123.5 371.0V408.2M1124.5 243.3V255.9M1125.5 370.9V415.8M1126.5 241.1V268.7M1126.5 370.4V391.5M1127.5 223.8V249.0M1127.5 355.7V385.2M1129.5 214.2V254.4M1129.5 366.9V384.0M1130.5 228.2V257.0M1130.5 365.1V416.7M1131.5 353.0V386.0M1132.5 214.8V255.4M1132.5 364.5V419.1M1133.5 366.3V414.8M1134.5 236.1V255.9M1134.5 357.1V405.5M1135.5 237.5V251.9M1135.5 367.1V387.3M1137.5 230.5V261.2M1137.5 358.2V377.5M1138.5 236.9V257.4M1139.5 355.4V423.4M1140.5 223.2V268.8M1141.5 214.6V249.5M1141.5 366.6V401.3M1142.5 245.4V250.7M1143.5 349.3V391.5M1145.5 360.8V398.7M1146.5 208.4V256.6M1146.5 354.0V377.7M1147.5 244.8V260.5M1148.5 215.1V256.5M1150.5 230.3V257.7M1150.5 369.9V428.8M1151.5 245.9V256.1M1152.5 214.9V250.6M1153.5 353.2V388.6M1154.5 244.3V256.7M1154.5 351.8V412.5M1156.5 228.4V256.2M1156.5 372.4V410.0M1157.5 205.7V257.8M1157.5 363.7V396.6M1158.5 213.3V250.9M1159.5 358.2V391.3M1160.5 366.5V389.1M1161.5 228.9V267.9M1161.5 364.8V375.4M1162.5 365.0V379.6M1163.5 370.1V388.5M1164.5 209.7V252.7M1164.5 355.9V411.0M1165.5 229.4V250.6M1165.5 369.9V391.2M1167.5 210.6V255.9M1168.5 189.2V252.5M1169.5 220.0V254.5M1169.5 354.2V378.1M1170.5 209.0V251.0M1170.5 371.6V408.5M1171.5 230.7V255.5M1172.5 238.7V256.9M1174.5 216.1V255.4M1175.5 225.7V254.8M1175.5 371.2V414.5M1176.5 371.7V414.2M1177.5 234.7V270.0M1177.5 367.2V404.2M1178.5 212.5V250.0M1179.5 218.9V258.1M1180.5 366.6V400.4M1181.5 244.2V250.7M1182.5 366.7V382.0M1183.5 246.3V250.9M1183.5 357.5V411.1M1184.5 225.7V263.2M1184.5 368.3V380.2M1185.5 228.0V268.5M1186.5 221.3V257.5M1186.5 372.7V411.3M1188.5 358.9V395.5M1189.5 236.2V254.0M1189.5 361.4V390.5M1190.5 224.0V254.5M1190.5 352.6V391.8M1191.5 365.3V425.8M1192.5 366.7V388.2M1193.5 210.9V266.9M1194.5 191.9V250.7M1196.5 215.4V249.8M1196.5 363.7V390.9M1197.5 363.7V379.8M1198.5 211.8V249.8M1198.5 365.1V380.2M1199.5 369.7V391.3M1200.5 352.3V396.8M1201.5 219.7V254.4M1201.5 366.6V383.2M1202.5 368.6V397.1M1203.5 217.7V257.8M1203.5 349.4V372.3M1204.5 248.6V262.1M1205.5 364.2V394.2M1206.5 245.7V271.5M1206.5 351.9V377.8M1207.5 250.5V264.4M1208.5 359.6V366.3M1209.5 356.0V382.5M1210.5 256.2V269.9M1211.5 239.1V270.6M1211.5 351.1V388.4M1212.5 256.4V270.8M1212.5 353.8V381.7M1214.5 244.5V277.4M1214.5 354.4V375.3M1215.5 265.7V275.3M1216.5 239.8V282.5M1216.5 351.1V378.1M1217.5 346.3V371.9M1218.5 261.1V277.5M1218.5 345.2V358.4M1219.5 252.2V283.1M1220.5 263.0V278.9M1220.5 342.9V358.6M1221.5 264.2V276.8M1222.5 337.7V352.2M1224.5 275.4V289.3M1224.5 339.7V368.2M1225.5 266.8V282.6M1225.5 339.5V364.3M1226.5 267.4V282.4M1227.5 279.9V287.2M1228.5 268.8V291.2M1228.5 334.0V360.7M1229.5 276.6V286.2M1229.5 334.7V346.1M1230.5 330.1V354.2M1231.5 279.8V294.5M1231.5 330.7V339.0M1232.5 281.2V288.0M1232.5 327.6V345.8M1233.5 327.0V348.0M1234.5 330.4V341.7M1237.5 289.3V293.0M1238.5 324.9V341.2M1239.5 288.4V294.9M1240.5 325.5V330.5M1241.5 284.2V299.0M1241.5 325.2V335.8M1242.5 287.9V299.8M1242.5 324.2V329.1M1243.5 287.3V300.5M1243.5 321.5V331.8M1244.5 320.9V329.8M1247.5 298.9V305.1M1248.5 297.4V304.8M1248.5 316.1V321.5M1249.5 299.4V303.5M1250.5 300.7V304.9M1250.5 317.0V324.4M1251.5 316.2V323.1M1253.5 303.4V306.8M1254.5 313.3V318.4M1255.5 303.8V308.1M1255.5 314.1V318.6M1256.5 313.2V317.9M1257.5 304.8V309.3M1257.5 312.0V316.6M1258.5 306.4V309.9M1258.5 312.1V316.4M1259.5 311.6V315.7M1260.5 308.6V311.0M1260.5 310.6V313.4" stroke="#4aae7e" stroke-width="1" shape-rendering="crispEdges"/><path d="M1014.5 252.5V370.6M1015.5 264.8V368.0M1016.5 270.5V354.0M1017.5 258.3V369.6M1018.5 249.3V369.0M1019.5 253.0V365.7M1020.5 263.6V355.2M1021.5 260.6V367.1M1022.5 269.3V374.9M1023.5 251.0V368.7M1024.5 259.3V367.5M1025.5 266.1V364.7M1026.5 251.4V364.6M1027.5 266.3V370.7M1028.5 256.8V374.1M1029.5 256.2V370.5M1030.5 248.0V373.7M1031.5 256.2V371.4M1032.5 266.6V372.5M1033.5 256.9V353.5M1034.5 255.0V369.3M1035.5 248.6V373.5M1036.5 250.7V369.9M1037.5 251.3V353.3M1038.5 250.7V369.5M1039.5 256.9V355.7M1040.5 257.8V374.1M1041.5 248.2V373.0M1042.5 254.9V374.0M1043.5 256.2V369.4M1044.5 261.7V366.4M1045.5 264.4V370.3M1046.5 248.0V367.1M1047.5 256.7V374.7M1048.5 252.9V361.3M1049.5 255.1V361.4M1050.5 250.8V354.9M1051.5 262.7V366.6M1052.5 248.9V374.0M1053.5 259.2V367.6M1054.5 250.2V361.2M1055.5 256.6V370.5M1056.5 256.0V365.6M1057.5 256.9V359.1M1058.5 248.1V373.0M1059.5 254.4V374.1M1060.5 249.3V355.8M1061.5 247.6V371.7M1062.5 260.9V374.8M1063.5 247.9V370.5M1064.5 249.4V354.1M1065.5 261.9V368.7M1066.5 249.5V368.9M1067.5 264.1V374.7M1068.5 267.2V369.6M1069.5 252.8V372.8M1070.5 261.4V368.6M1071.5 265.0V360.2M1072.5 251.5V371.3M1073.5 248.9V358.2M1074.5 251.5V372.5M1075.5 261.8V356.8M1076.5 255.6V368.6M1077.5 252.6V373.0M1078.5 253.4V357.6M1079.5 260.9V367.8M1080.5 259.6V365.8M1081.5 254.8V372.7M1082.5 249.8V372.1M1083.5 247.4V371.4M1084.5 265.7V359.2M1085.5 256.4V369.6M1086.5 265.3V357.9M1087.5 247.9V368.4M1088.5 251.8V367.7M1089.5 264.9V358.3M1090.5 249.3V365.0M1091.5 252.3V374.6M1092.5 254.9V361.2M1093.5 266.1V371.9M1094.5 259.2V369.6M1095.5 253.6V354.4M1096.5 265.3V365.9M1097.5 267.1V358.7M1098.5 266.3V369.1M1099.5 266.4V371.5M1100.5 251.5V358.6M1101.5 265.4V367.0M1102.5 247.3V366.4M1103.5 251.0V358.2M1104.5 256.7V366.8M1105.5 262.0V353.1M1106.5 250.6V358.0M1107.5 249.5V369.9M1108.5 251.7V369.3M1109.5 268.9V370.9M1110.5 261.4V367.4M1111.5 260.9V361.5M1112.5 248.0V373.2M1113.5 262.3V369.7M1114.5 259.8V365.5M1115.5 249.9V366.3M1116.5 255.2V367.4M1117.5 259.4V363.6M1118.5 259.3V352.8M1119.5 249.5V368.8M1120.5 251.8V370.1M1121.5 254.6V369.4M1122.5 256.6V371.0M1123.5 262.5V373.0M1124.5 253.9V359.7M1125.5 262.3V372.9M1126.5 266.7V372.4M1127.5 247.0V357.7M1128.5 261.2V371.1M1129.5 252.4V368.9M1130.5 255.0V367.1M1131.5 256.3V355.0M1132.5 253.4V366.5M1133.5 248.2V368.3M1134.5 253.9V359.1M1135.5 249.9V369.1M1136.5 250.7V370.7M1137.5 259.2V360.2M1138.5 255.4V358.6M1139.5 250.0V357.4M1140.5 266.8V367.5M1141.5 247.5V368.6M1142.5 248.7V373.8M1143.5 265.4V351.3M1144.5 250.8V370.6M1145.5 250.1V362.8M1146.5 254.6V356.0M1147.5 258.5V369.8M1148.5 254.5V372.2M1149.5 250.8V359.4M1150.5 255.7V371.9M1151.5 254.1V358.2M1152.5 248.6V367.8M1153.5 263.3V355.2M1154.5 254.7V353.8M1155.5 247.0V367.0M1156.5 254.2V374.4M1157.5 255.8V365.7M1158.5 248.9V372.9M1159.5 261.3V360.2M1160.5 259.3V368.5M1161.5 265.9V366.8M1162.5 247.5V367.0M1163.5 266.8V372.1M1164.5 250.7V357.9M1165.5 248.6V371.9M1166.5 256.7V371.3M1167.5 253.9V372.4M1168.5 250.5V374.4M1169.5 252.5V356.2M1170.5 249.0V373.6M1171.5 253.5V357.8M1172.5 254.9V371.3M1173.5 254.2V355.4M1174.5 253.4V367.0M1175.5 252.8V373.2M1176.5 262.8V373.7M1177.5 268.0V369.2M1178.5 248.0V367.5M1179.5 256.1V368.6M1180.5 252.3V368.6M1181.5 248.7V371.5M1182.5 267.3V368.7M1183.5 248.9V359.5M1184.5 261.2V370.3M1185.5 266.5V357.5M1186.5 255.5V374.7M1187.5 248.8V360.1M1188.5 269.7V360.9M1189.5 252.0V363.4M1190.5 252.5V354.6M1191.5 252.2V367.3M1192.5 251.0V368.7M1193.5 264.9V367.5M1194.5 248.7V368.3M1195.5 250.6V365.2M1196.5 247.8V365.7M1197.5 259.2V365.7M1198.5 247.8V367.1M1199.5 253.2V371.7M1200.5 251.1V354.3M1201.5 252.4V368.6M1202.5 258.7V370.6M1203.5 255.8V351.4M1204.5 260.1V369.2M1205.5 261.6V366.2M1206.5 269.5V353.9M1207.5 262.4V359.5M1208.5 261.5V361.6M1209.5 263.3V358.0M1210.5 267.9V349.7M1211.5 268.6V353.1M1212.5 268.8V355.8M1213.5 267.2V346.9M1214.5 275.4V356.4M1215.5 273.3V348.9M1216.5 280.5V353.1M1217.5 270.3V348.3M1218.5 275.5V347.2M1219.5 281.1V345.7M1220.5 276.9V344.9M1221.5 274.8V347.2M1222.5 280.3V339.7M1223.5 276.3V341.4M1224.5 287.3V341.7M1225.5 280.6V341.5M1226.5 280.4V335.1M1227.5 285.2V339.1M1228.5 289.2V336.0M1229.5 284.2V336.7M1230.5 285.9V332.1M1231.5 292.5V332.7M1232.5 286.0V329.6M1233.5 288.7V329.0M1234.5 288.1V332.4M1235.5 294.2V330.4M1236.5 290.4V329.5M1237.5 291.0V327.4M1238.5 292.5V326.9M1239.5 292.9V328.3M1240.5 294.2V327.5M1241.5 297.0V327.2M1242.5 297.8V326.2M1243.5 298.5V323.5M1244.5 297.3V322.9M1245.5 299.0V321.7M1246.5 300.2V322.6M1247.5 303.1V320.6M1248.5 302.8V318.1M1249.5 301.5V320.4M1250.5 302.9V319.0M1251.5 303.6V318.2M1252.5 304.4V318.2M1253.5 304.8V317.2M1254.5 306.0V315.3M1255.5 306.1V316.1M1256.5 306.7V315.2M1257.5 307.3V314.0M1258.5 307.9V314.1M1259.5 308.4V313.6M1260.5 309.0V312.6M1261.5 310V312M1262.5 310V312M1263.5 310V312M1264.5 310V312M1265.5 310V312M1266.5 310V312M1267.5 310V312M1268.5 310V312M1269.5 310V312M1270.5 310V312M1271.5 310V312M1272.5 310V312M1273.5 310V312M1274.5 310V312M1275.5 310V312" stroke="#3f9b6d" stroke-width="1" shape-rendering="crispEdges"/><path d="M1014 210.5H1276M1014 411.5H1276" stroke="#8e8e8e" stroke-width="2"/><path d="M1014.5 604.7V638.5M1015.5 496.5V504.4M1015.5 608.5V661.4M1016.5 495.2V511.5M1016.5 615.2V668.5M1017.5 464.7V517.9M1017.5 605.9V643.8M1018.5 622.3V642.0M1019.5 478.0V508.7M1019.5 618.6V628.2M1020.5 607.5V656.2M1021.5 478.8V518.6M1021.5 617.1V667.1M1023.5 464.1V506.0M1025.5 493.5V518.8M1028.5 608.8V666.2M1029.5 485.4V505.7M1030.5 621.6V647.5M1031.5 605.3V635.5M1032.5 616.6V637.5M1033.5 471.1V505.6M1034.5 493.3V507.8M1036.5 487.9V504.9M1037.5 496.8V516.8M1038.5 455.3V507.9M1039.5 473.5V521.3M1039.5 616.9V631.3M1040.5 479.4V504.5M1041.5 470.0V508.2M1043.5 497.8V501.3M1044.5 604.6V667.0M1046.5 478.6V507.6M1046.5 618.8V635.2M1048.5 483.1V509.3M1048.5 620.5V640.0M1049.5 483.6V506.4M1050.5 609.6V637.5M1051.5 603.6V653.8M1052.5 618.9V658.6M1053.5 486.1V504.4M1054.5 485.8V502.0M1054.5 616.5V664.3M1055.5 478.4V509.4M1056.5 624.3V665.2M1057.5 463.8V516.8M1057.5 614.3V675.4M1058.5 624.2V664.6M1060.5 471.7V505.8M1060.5 622.8V642.3M1061.5 608.9V634.4M1062.5 621.6V661.6M1063.5 495.1V509.3M1063.5 615.2V647.6M1065.5 602.2V661.4M1066.5 471.3V510.5M1066.5 618.2V647.2M1068.5 620.9V635.5M1070.5 620.4V636.8M1071.5 624.4V633.2M1072.5 604.5V638.4M1073.5 440.3V524.2M1073.5 623.3V681.4M1075.5 487.8V510.7M1077.5 488.2V509.9M1077.5 617.7V665.1M1078.5 482.5V501.7M1079.5 464.3V509.4M1080.5 618.9V632.7M1082.5 606.8V655.7M1083.5 495.2V510.1M1083.5 617.1V630.4M1085.5 616.7V663.1M1086.5 471.8V502.1M1086.5 624.6V647.2M1087.5 485.1V504.7M1088.5 462.0V520.5M1088.5 605.6V645.0M1089.5 478.1V509.2M1091.5 621.4V649.7M1092.5 497.7V502.0M1092.5 616.2V645.8M1093.5 487.2V501.5M1094.5 463.0V508.9M1094.5 619.9V659.1M1095.5 464.1V506.7M1095.5 608.9V668.5M1097.5 458.6V505.9M1098.5 463.4V520.5M1098.5 622.5V652.8M1099.5 463.4V516.1M1100.5 482.4V520.0M1102.5 485.4V508.3M1104.5 467.5V519.5M1105.5 468.0V507.3M1106.5 486.1V506.9M1106.5 620.8V664.6M1107.5 477.5V509.3M1107.5 621.5V632.5M1108.5 489.8V501.3M1108.5 609.5V664.7M1109.5 458.6V508.8M1109.5 620.6V637.8M1110.5 471.4V522.0M1110.5 621.1V650.5M1111.5 472.2V502.1M1111.5 616.3V636.5M1112.5 464.4V501.7M1114.5 616.0V664.8M1115.5 615.0V641.2M1116.5 608.7V648.9M1117.5 460.0V502.9M1117.5 621.3V668.5M1118.5 623.3V650.5M1120.5 472.6V520.5M1120.5 620.1V660.6M1121.5 464.0V501.9M1122.5 483.9V504.8M1123.5 487.4V521.3M1124.5 496.3V510.2M1125.5 608.5V662.8M1126.5 483.0V510.8M1127.5 497.0V508.4M1128.5 606.5V680.8M1129.5 488.4V502.4M1129.5 616.1V640.6M1130.5 490.0V510.2M1130.5 617.7V649.2M1131.5 480.3V509.7M1133.5 620.6V661.7M1134.5 490.6V504.8M1134.5 623.4V633.8M1135.5 491.8V518.7M1135.5 622.4V643.3M1136.5 486.4V505.5M1136.5 616.4V662.7M1139.5 467.3V502.4M1139.5 619.9V654.1M1140.5 465.4V517.3M1140.5 624.3V629.2M1141.5 461.3V516.5M1142.5 617.6V636.3M1144.5 493.6V503.6M1144.5 615.7V665.1M1145.5 621.1V638.5M1146.5 469.0V506.8M1146.5 615.3V636.1M1147.5 497.2V502.1M1147.5 602.0V639.8M1148.5 475.3V519.1M1148.5 607.3V653.9M1149.5 460.7V501.1M1149.5 621.7V661.1M1150.5 462.2V502.8M1150.5 622.8V651.4M1151.5 612.5V668.1M1152.5 622.1V650.9M1153.5 604.5V661.2M1154.5 484.7V518.8M1155.5 475.7V512.0M1155.5 624.8V635.5M1156.5 497.5V516.4M1157.5 624.5V630.8M1158.5 459.4V510.0M1158.5 618.4V653.7M1159.5 489.3V502.4M1159.5 614.2V671.8M1160.5 483.2V501.6M1161.5 620.8V634.6M1162.5 483.9V505.6M1163.5 602.6V662.4M1164.5 465.2V504.5M1164.5 610.8V631.1M1165.5 462.6V510.3M1166.5 495.0V510.0M1166.5 613.2V633.0M1167.5 464.1V503.4M1168.5 616.6V635.9M1169.5 462.1V523.5M1169.5 617.0V643.6M1170.5 621.8V631.2M1171.5 616.1V641.0M1172.5 461.9V502.6M1172.5 614.8V651.1M1173.5 460.9V501.4M1173.5 619.7V645.5M1175.5 485.6V513.6M1175.5 619.0V639.1M1176.5 471.0V514.8M1177.5 470.9V502.0M1177.5 621.9V665.8M1178.5 620.5V670.2M1180.5 619.4V685.0M1181.5 617.2V654.9M1182.5 483.9V503.8M1182.5 617.1V643.4M1183.5 469.0V522.7M1185.5 484.7V508.3M1186.5 471.8V509.0M1187.5 493.7V520.5M1187.5 619.2V669.0M1188.5 602.6V677.8M1189.5 468.6V507.1M1191.5 497.8V501.8M1192.5 606.2V637.3M1193.5 477.8V519.0M1193.5 616.8V683.9M1194.5 489.2V504.2M1194.5 625.0V629.8M1195.5 469.3V517.5M1198.5 494.8V503.8M1199.5 475.7V507.3M1199.5 618.7V665.5M1200.5 496.8V503.9M1200.5 604.5V654.6M1201.5 465.0V506.5M1201.5 616.9V650.5M1202.5 472.4V506.9M1203.5 492.2V523.2M1203.5 602.5V630.9M1204.5 480.3V519.8M1204.5 611.1V641.9M1205.5 477.2V514.6M1205.5 609.5V631.2M1206.5 614.1V623.2M1207.5 492.2V514.3M1207.5 607.6V627.1M1208.5 504.5V518.2M1210.5 499.3V529.1M1210.5 605.7V624.2M1211.5 503.1V518.3M1211.5 594.5V640.4M1213.5 606.8V627.7M1214.5 495.8V533.2M1214.5 604.1V611.6M1216.5 501.6V531.9M1216.5 601.2V622.5M1217.5 594.5V609.7M1219.5 596.2V611.3M1220.5 503.4V527.9M1220.5 599.2V607.5M1221.5 593.2V619.1M1222.5 587.5V613.8M1223.5 505.2V531.5M1223.5 595.3V619.3M1224.5 522.9V532.8M1224.5 585.6V598.3M1225.5 589.8V623.5M1226.5 506.9V534.6M1226.5 590.6V604.3M1230.5 530.9V544.0M1231.5 531.6V539.5M1235.5 530.5V544.2M1235.5 582.6V598.6M1236.5 539.5V545.4M1238.5 574.7V593.9M1239.5 543.4V547.4M1240.5 541.0V552.5M1240.5 577.9V582.3M1241.5 538.1V552.2M1241.5 575.4V587.3M1242.5 575.9V583.6M1243.5 575.0V582.2M1244.5 549.1V552.6M1244.5 573.9V577.4M1245.5 543.0V553.6M1246.5 544.9V553.1M1246.5 571.9V580.9M1247.5 551.0V556.5M1247.5 571.5V577.6M1248.5 569.9V573.6M1249.5 547.8V558.8M1250.5 568.4V575.8M1251.5 553.4V557.9M1253.5 553.0V558.6M1254.5 566.8V572.1M1255.5 554.4V560.6M1256.5 565.5V567.7M1257.5 556.9V561.6M1258.5 557.6V562.0M1258.5 564.0V566.8M1259.5 563.7V566.2M1260.5 559.7V563.1M1260.5 563.1V566.4" stroke="#4aae7e" stroke-width="1" shape-rendering="crispEdges"/><path d="M1014.5 504.3V606.7M1015.5 502.4V610.5M1016.5 509.5V617.2M1017.5 515.9V607.9M1018.5 508.7V624.3M1019.5 506.7V620.6M1020.5 504.7V609.5M1021.5 516.6V619.1M1022.5 516.3V626.1M1023.5 504.0V617.2M1024.5 506.4V611.5M1025.5 516.8V619.9M1026.5 503.4V623.2M1027.5 505.5V620.7M1028.5 503.7V610.8M1029.5 503.7V610.6M1030.5 501.4V623.6M1031.5 506.6V607.3M1032.5 502.0V618.6M1033.5 503.6V624.6M1034.5 505.8V622.0M1035.5 506.1V626.4M1036.5 502.9V624.8M1037.5 514.8V619.1M1038.5 505.9V618.4M1039.5 519.3V618.9M1040.5 502.5V625.0M1041.5 506.2V626.2M1042.5 518.1V608.7M1043.5 499.3V626.6M1044.5 504.8V606.6M1045.5 506.0V626.2M1046.5 505.6V620.8M1047.5 516.7V623.1M1048.5 507.3V622.5M1049.5 504.4V605.8M1050.5 505.0V611.6M1051.5 504.6V605.6M1052.5 499.6V620.9M1053.5 502.4V623.2M1054.5 500.0V618.5M1055.5 507.4V618.2M1056.5 499.9V626.3M1057.5 514.8V616.3M1058.5 508.2V626.2M1059.5 500.0V617.2M1060.5 503.8V624.8M1061.5 499.2V610.9M1062.5 516.3V623.6M1063.5 507.3V617.2M1064.5 503.7V617.3M1065.5 507.0V604.2M1066.5 508.5V620.2M1067.5 504.2V626.0M1068.5 514.9V622.9M1069.5 499.1V623.8M1070.5 520.4V622.4M1071.5 508.1V626.4M1072.5 514.8V606.5M1073.5 522.2V625.3M1074.5 506.9V621.4M1075.5 508.7V605.0M1076.5 507.3V623.0M1077.5 507.9V619.7M1078.5 499.7V623.8M1079.5 507.4V621.5M1080.5 505.8V620.9M1081.5 504.4V620.6M1082.5 499.2V608.8M1083.5 508.1V619.1M1084.5 507.2V606.8M1085.5 499.5V618.7M1086.5 500.1V626.6M1087.5 502.7V622.9M1088.5 518.5V607.6M1089.5 507.2V623.8M1090.5 508.0V615.5M1091.5 508.9V623.4M1092.5 500.0V618.2M1093.5 499.5V618.0M1094.5 506.9V621.9M1095.5 504.7V610.9M1096.5 507.8V611.0M1097.5 503.9V606.6M1098.5 518.5V624.5M1099.5 514.1V626.8M1100.5 518.0V618.2M1101.5 506.7V624.9M1102.5 506.3V621.8M1103.5 500.5V608.8M1104.5 517.5V612.5M1105.5 505.3V624.4M1106.5 504.9V622.8M1107.5 507.3V623.5M1108.5 499.3V611.5M1109.5 506.8V622.6M1110.5 520.0V623.1M1111.5 500.1V618.3M1112.5 499.7V625.7M1113.5 500.0V612.6M1114.5 502.4V618.0M1115.5 499.1V617.0M1116.5 505.6V610.7M1117.5 500.9V623.3M1118.5 500.1V625.3M1119.5 505.7V616.5M1120.5 518.5V622.1M1121.5 499.9V620.9M1122.5 502.8V617.1M1123.5 519.3V620.4M1124.5 508.2V620.4M1125.5 505.7V610.5M1126.5 508.8V603.7M1127.5 506.4V620.6M1128.5 503.9V608.5M1129.5 500.4V618.1M1130.5 508.2V619.7M1131.5 507.7V623.1M1132.5 507.2V622.8M1133.5 502.8V622.6M1134.5 502.8V625.4M1135.5 516.7V624.4M1136.5 503.5V618.4M1137.5 502.5V608.8M1138.5 519.3V619.7M1139.5 500.4V621.9M1140.5 515.3V626.3M1141.5 514.5V613.3M1142.5 512.5V619.6M1143.5 516.0V625.1M1144.5 501.6V617.7M1145.5 506.1V623.1M1146.5 504.8V617.3M1147.5 500.1V604.0M1148.5 517.1V609.3M1149.5 499.1V623.7M1150.5 500.8V624.8M1151.5 505.5V614.5M1152.5 507.0V624.1M1153.5 518.7V606.5M1154.5 516.8V624.2M1155.5 510.0V626.8M1156.5 514.4V621.3M1157.5 521.0V626.5M1158.5 508.0V620.4M1159.5 500.4V616.2M1160.5 499.6V626.6M1161.5 507.1V622.8M1162.5 503.6V608.2M1163.5 508.5V604.6M1164.5 502.5V612.8M1165.5 508.3V625.2M1166.5 508.0V615.2M1167.5 501.4V609.9M1168.5 505.0V618.6M1169.5 521.5V619.0M1170.5 500.3V623.8M1171.5 508.3V618.1M1172.5 500.6V616.8M1173.5 499.4V621.7M1174.5 499.6V605.5M1175.5 511.6V621.0M1176.5 512.8V625.1M1177.5 500.0V623.9M1178.5 504.5V622.5M1179.5 505.2V618.7M1180.5 504.8V621.4M1181.5 516.8V619.2M1182.5 501.8V619.1M1183.5 520.7V620.8M1184.5 519.4V609.4M1185.5 506.3V617.6M1186.5 507.0V619.4M1187.5 518.5V621.2M1188.5 519.0V604.6M1189.5 505.1V624.8M1190.5 500.6V617.6M1191.5 499.8V625.9M1192.5 504.8V608.2M1193.5 517.0V618.8M1194.5 502.2V627.0M1195.5 515.5V619.7M1196.5 505.6V619.7M1197.5 519.4V618.8M1198.5 501.8V606.9M1199.5 505.3V620.7M1200.5 501.9V606.5M1201.5 504.5V618.9M1202.5 504.9V619.0M1203.5 521.2V604.5M1204.5 517.8V613.1M1205.5 512.6V611.5M1206.5 507.4V616.1M1207.5 512.3V609.6M1208.5 516.2V598.7M1209.5 514.4V613.2M1210.5 527.1V607.7M1211.5 516.3V596.5M1212.5 518.5V603.8M1213.5 518.3V608.8M1214.5 531.2V606.1M1215.5 529.4V602.8M1216.5 529.9V603.2M1217.5 526.4V596.5M1218.5 531.2V602.3M1219.5 524.0V598.2M1220.5 525.9V601.2M1221.5 528.2V595.2M1222.5 529.8V589.5M1223.5 529.5V597.3M1224.5 530.8V587.6M1225.5 533.2V591.8M1226.5 532.6V592.6M1227.5 536.2V593.2M1228.5 536.8V590.4M1229.5 544.4V582.7M1230.5 542.0V584.3M1231.5 537.5V585.9M1232.5 541.3V586.6M1233.5 540.4V584.3M1234.5 542.9V586.0M1235.5 542.2V584.6M1236.5 543.4V584.1M1237.5 547.0V580.4M1238.5 546.2V576.7M1239.5 545.4V576.6M1240.5 550.5V579.9M1241.5 550.2V577.4M1242.5 551.0V577.9M1243.5 550.4V577.0M1244.5 550.6V575.9M1245.5 551.6V574.9M1246.5 551.1V573.9M1247.5 554.5V573.5M1248.5 554.1V571.9M1249.5 556.8V572.6M1250.5 555.0V570.4M1251.5 555.9V569.9M1252.5 558.0V569.7M1253.5 556.6V568.3M1254.5 557.3V568.8M1255.5 558.6V567.4M1256.5 558.5V567.5M1257.5 559.6V566.8M1258.5 560.0V566.0M1259.5 560.6V565.7M1260.5 561.1V565.1M1261.5 562V564M1262.5 562V564M1263.5 562V564M1264.5 562V564M1265.5 562V564M1266.5 562V564M1267.5 562V564M1268.5 562V564M1269.5 562V564M1270.5 562V564M1271.5 562V564M1272.5 562V564M1273.5 562V564M1274.5 562V564M1275.5 562V564" stroke="#3f9b6d" stroke-width="1" shape-rendering="crispEdges"/><path d="M1014 462.5H1276M1014 662.5H1276" stroke="#8e8e8e" stroke-width="2"/><path d="M1276.5 186V687M1276 191.5H1279.5M1276 197.5H1281.5M1276 202.5H1279.5M1276 208.5H1279.5M1276 214.5H1279.5M1276 219.5H1279.5M1276 225.5H1281.5M1276 231.5H1279.5M1276 237.5H1279.5M1276 242.5H1279.5M1276 248.5H1279.5M1276 254.5H1281.5M1276 260.5H1279.5M1276 265.5H1279.5M1276 271.5H1279.5M1276 277.5H1279.5M1276 282.5H1281.5M1276 288.5H1279.5M1276 294.5H1279.5M1276 300.5H1279.5M1276 305.5H1279.5M1276 311.5H1281.5M1276 317.5H1279.5M1276 322.5H1279.5M1276 328.5H1279.5M1276 334.5H1279.5M1276 340.5H1281.5M1276 345.5H1279.5M1276 351.5H1279.5M1276 357.5H1279.5M1276 362.5H1279.5M1276 368.5H1281.5M1276 374.5H1279.5M1276 380.5H1279.5M1276 385.5H1279.5M1276 391.5H1279.5M1276 397.5H1281.5M1276 403.5H1279.5M1276 408.5H1279.5M1276 414.5H1279.5M1276 420.5H1279.5M1276 425.5H1281.5M1276 431.5H1279.5M1276 443.5H1279.5M1276 449.5H1281.5M1276 454.5H1279.5M1276 460.5H1279.5M1276 466.5H1279.5M1276 471.5H1279.5M1276 477.5H1281.5M1276 483.5H1279.5M1276 489.5H1279.5M1276 494.5H1279.5M1276 500.5H1279.5M1276 506.5H1281.5M1276 512.5H1279.5M1276 517.5H1279.5M1276 523.5H1279.5M1276 529.5H1279.5M1276 534.5H1281.5M1276 540.5H1279.5M1276 546.5H1279.5M1276 552.5H1279.5M1276 557.5H1279.5M1276 563.5H1281.5M1276 569.5H1279.5M1276 574.5H1279.5M1276 580.5H1279.5M1276 586.5H1279.5M1276 592.5H1281.5M1276 597.5H1279.5M1276 603.5H1279.5M1276 609.5H1279.5M1276 614.5H1279.5M1276 620.5H1281.5M1276 626.5H1279.5M1276 632.5H1279.5M1276 637.5H1279.5M1276 643.5H1279.5M1276 649.5H1281.5M1276 655.5H1279.5M1276 660.5H1279.5M1276 666.5H1279.5M1276 672.5H1279.5M1276 677.5H1281.5M1276 683.5H1279.5M1276 186.5H1283M1276 437.5H1283M1276 438.5H1283M1276 686.5H1283" stroke="#d6d6d6" stroke-width="1"/><path d="M1014 688.5H1276M1014.5 688V691.5M1021.5 688V697M1028.5 688V691.5M1035.5 688V691.5M1042.5 688V691.5M1049.5 688V691.5M1056.5 688V691.5M1063.5 688V691.5M1070.5 688V691.5M1077.5 688V691.5M1084.5 688V691.5M1091.5 688V697M1098.5 688V691.5M1105.5 688V691.5M1111.5 688V691.5M1118.5 688V691.5M1125.5 688V691.5M1132.5 688V691.5M1139.5 688V691.5M1146.5 688V691.5M1153.5 688V691.5M1160.5 688V697M1167.5 688V691.5M1174.5 688V691.5M1181.5 688V691.5M1188.5 688V691.5M1195.5 688V691.5M1202.5 688V691.5M1209.5 688V691.5M1215.5 688V691.5M1222.5 688V691.5M1229.5 688V697M1236.5 688V691.5M1243.5 688V691.5M1250.5 688V691.5M1257.5 688V691.5M1264.5 688V691.5M1271.5 688V691.5" stroke="#d6d6d6" stroke-width="1.2"/></svg>
<div class="t" style="left:1284px;top:190.1px;font-size:11px;color:#e4e4e4">+30000</div>
<div class="t" style="left:1284px;top:218.7px;font-size:11px;color:#e4e4e4">+22500</div>
<div class="t" style="left:1284px;top:247.3px;font-size:11px;color:#e4e4e4">+15000</div>
<div class="t" style="left:1284px;top:275.9px;font-size:11px;color:#e4e4e4">+7500</div>
<div class="t" style="left:1284px;top:304.5px;font-size:11px;color:#e4e4e4">+0</div>
<div class="t" style="left:1284px;top:333.1px;font-size:11px;color:#e4e4e4">-7500</div>
<div class="t" style="left:1284px;top:361.7px;font-size:11px;color:#e4e4e4">-15000</div>
<div class="t" style="left:1284px;top:390.3px;font-size:11px;color:#e4e4e4">-22500</div>
<div class="t" style="left:1284px;top:418.9px;font-size:11px;color:#e4e4e4">-30000</div>
<div class="t" style="left:1284px;top:442.1px;font-size:11px;color:#e4e4e4">+30000</div>
<div class="t" style="left:1284px;top:470.7px;font-size:11px;color:#e4e4e4">+22500</div>
<div class="t" style="left:1284px;top:499.3px;font-size:11px;color:#e4e4e4">+15000</div>
<div class="t" style="left:1284px;top:527.9px;font-size:11px;color:#e4e4e4">+7500</div>
<div class="t" style="left:1284px;top:556.5px;font-size:11px;color:#e4e4e4">+0</div>
<div class="t" style="left:1284px;top:585.1px;font-size:11px;color:#e4e4e4">-7500</div>
<div class="t" style="left:1284px;top:613.7px;font-size:11px;color:#e4e4e4">-15000</div>
<div class="t" style="left:1284px;top:642.3px;font-size:11px;color:#e4e4e4">-22500</div>
<div class="t" style="left:1284px;top:670.9px;font-size:11px;color:#e4e4e4">-30000</div>
<div class="t" style="left:1025px;top:693px;font-size:11px;color:#e4e4e4">06:40.000</div>
<div class="t" style="left:1094px;top:693px;font-size:11px;color:#e4e4e4">07:20.000</div>
<div class="t" style="left:1164px;top:693px;font-size:11px;color:#e4e4e4">08:00.000</div>
<div class="t" style="left:1233px;top:693px;font-size:11px;color:#e4e4e4">08:40.000</div>
<div class="a" style="left:0;top:0;width:1342px;height:712px;border:1px solid #a2a2a2;pointer-events:none"></div>
<div class="a" style="left:320px;top:8px;width:694px;height:704px;background:#373737;border-left:1px solid #5a8ac8;border-right:1px solid #4f86cc"></div>
<div class="a" style="left:321px;top:39px;width:1px;height:673px;background:#143e7a"></div>
<div class="a" style="left:1012px;top:39px;width:1px;height:673px;background:#1a4a8e"></div>
<div class="a" style="left:320px;top:8px;width:694px;height:31px;background:#0078d7"></div>
<div class="t" style="left:350px;top:17px;color:#fff;font-size:12px">Настройки звука</div>
<svg class="a" style="left:329.5px;top:14.5px" width="15" height="17" viewBox="0 0 15 17"><path d="M3.2 1.2 L10 0.6 L11.8 4 L14.2 10.5 L9.8 15.8 L5 16.4 L0.9 11.6 L1.2 5 Z" fill="#eef2f4"/><path d="M3.9 2.3 L9.5 1.9 L10.9 5 L13 10.6 L9.2 14.8 L5.4 15.2 L2.1 11.3 L2.4 5.4 Z" fill="#4a2a1a"/><path d="M4.2 2.8 L9.2 2.5 L10.2 5.2 L4 6.2 Z" fill="#bfae9e"/><path d="M7 2.6 L8.6 2.5 L8.8 5 L7.2 5.2 Z" fill="#ffffff"/><ellipse cx="7.6" cy="9.6" rx="3.3" ry="3.3" fill="#e6a026"/><rect x="6" y="8.6" width="1" height="1" fill="#5a3010"/><rect x="8.6" y="8.6" width="1" height="1" fill="#5a3010"/><path d="M5.8 11.6 Q7.6 11 9.6 11.6 L9.2 14.6 L6.4 14.8 Z" fill="#1a0e08"/></svg>
<svg class="a" style="left:992px;top:17px" width="12" height="12" viewBox="0 0 12 12"><path d="M1 1 L11 11 M11 1 L1 11" stroke="#fff" stroke-width="1.3"/></svg>
<div class="a" style="left:321px;top:39px;width:692px;height:96px;background:#555555;border-bottom:1px solid #616161"></div>
<div class="a" style="left:321px;top:135px;width:692px;height:1px;background:#2e2e2e"></div>
<div class="a" style="left:413px;top:53px;width:86px;height:69px;background:#3f86f4;border-radius:8px"></div>
<svg class="a" style="left:0;top:0" width="1342" height="140" viewBox="0 0 1342 140"><path d="M383.88 81.78 L381.35 85.84 L377.46 84.10 L375.16 85.75 L375.53 89.99 L370.87 91.06 L369.35 87.09 L366.55 86.62 L363.82 89.88 L359.76 87.35 L361.50 83.46 L359.85 81.16 L355.61 81.53 L354.54 76.87 L358.51 75.35 L358.98 72.55 L355.72 69.82 L358.25 65.76 L362.14 67.50 L364.44 65.85 L364.07 61.61 L368.73 60.54 L370.25 64.51 L373.05 64.98 L375.78 61.72 L379.84 64.25 L378.10 68.14 L379.75 70.44 L383.99 70.07 L385.06 74.73 L381.09 76.25 L380.62 79.05 Z" fill="#b9b9b9"/><circle cx="369.8" cy="75.8" r="6.3" fill="none" stroke="#555555" stroke-width="2.4"/><path d="M540 57 H552 Q555 57 555 60 V78 Q555 81 552 81 H532 Q529 81 529 78 V71 Q529 68 532 68 H537 V60 Q537 57 540 57 Z" fill="#b9b9b9"/><path d="M548 70 V75 H536" fill="none" stroke="#535353" stroke-width="2"/><path d="M535 75 L539 72 V78 Z" fill="#535353"/><rect x="623.5" y="87.5" width="9.5" height="3.4" fill="#b9b9b9"/><rect x="623.5" y="82.7" width="9.5" height="3.4" fill="#b9b9b9"/><rect x="623.5" y="77.9" width="9.5" height="3.4" fill="#b9b9b9"/><rect x="623.5" y="73.1" width="9.5" height="3.4" fill="#b9b9b9"/><rect x="634.5" y="87.5" width="9.5" height="3.4" fill="#b9b9b9"/><rect x="634.5" y="82.7" width="9.5" height="3.4" fill="#b9b9b9"/><rect x="634.5" y="77.9" width="9.5" height="3.4" fill="#b9b9b9"/><rect x="634.5" y="73.1" width="9.5" height="3.4" fill="#b9b9b9"/><rect x="634.5" y="68.3" width="9.5" height="3.4" fill="#b9b9b9"/><rect x="634.5" y="63.5" width="9.5" height="3.4" fill="#b9b9b9"/><rect x="645.5" y="87.5" width="9.5" height="3.4" fill="#b9b9b9"/><rect x="645.5" y="82.7" width="9.5" height="3.4" fill="#b9b9b9"/><circle cx="736.8" cy="76.6" r="15.4" fill="#b9b9b9"/><path d="M731.5 70.1 L745.1 74.5 L733.9 83.7 Z M731.5 70.1 L734.9 61.5 M731.5 70.1 L721.8 71.8 M745.1 74.5 L749.5 66.5 M745.1 74.5 L752.5 80.5 M733.9 83.7 L723.5 86 M733.9 83.7 L739.5 92.5" fill="none" stroke="#555555" stroke-width="1.9" stroke-linejoin="round"/><circle cx="731.5" cy="70.1" r="2.4" fill="#555555"/><circle cx="745.1" cy="74.5" r="2.6" fill="#555555"/><circle cx="733.9" cy="83.7" r="2.4" fill="#555555"/><path d="M822.5 63.3 L825.9 73.5 L837.6 76.9 L825.9 80.3 L822.5 91.9 L819.1 80.3 L807.6 76.9 L819.1 73.5 Z" fill="#b9b9b9"/><path d="M833.2 61 L834.7 65.2 L838.8 66.7 L834.7 68.2 L833.2 72.5 L831.7 68.2 L827.6 66.7 L831.7 65.2 Z" fill="#b9b9b9"/><g transform="translate(909 77) rotate(45)"><rect x="-9.7" y="-9.7" width="19.4" height="19.4" rx="2.2" fill="#b9b9b9"/><circle cx="-14.2" cy="0" r="4" fill="#b9b9b9"/><rect x="-12" y="-1.8" width="3" height="3.6" fill="#b9b9b9"/><circle cx="14.6" cy="0" r="4" fill="#b9b9b9"/><rect x="9" y="-1.8" width="3" height="3.6" fill="#b9b9b9"/><circle cx="0" cy="-5.4" r="3" fill="#555555"/><rect x="-1.3" y="-10" width="2.6" height="5" fill="#555555"/></g></svg>
<svg class="a" style="left:436px;top:57px" width="40" height="40" viewBox="-20 -20 40 40"><g transform="scale(1.0) rotate(43)"><path d="M-19.6 0 A19.6 7 0 0 0 19.6 0 Z" fill="#ffffff"/><path d="M-10.5 0 A10.5 11.5 0 0 0 10.5 0 Z" fill="#ffffff"/><path d="M-18.3 0.3 A18.3 5.6 0 0 1 -8 -5.04" fill="none" stroke="#ffffff" stroke-width="2.7" stroke-linecap="round"/><path d="M9 -4.88 A18.3 5.6 0 0 1 18.3 0.3" fill="none" stroke="#ffffff" stroke-width="2.7" stroke-linecap="round"/><ellipse cx="0" cy="0.3" rx="16.3" ry="2.4" fill="#3f86f4"/><path d="M-5.8 -2.7 A5.8 6.4 0 0 1 5.8 -2.7 Z" fill="#ffffff"/></g></svg>
<div class="tl" style="left:320px;top:102px;color:#b9b9b9">Общие</div>
<div class="tl" style="left:406px;top:102px;color:#ffffff">Звук</div>
<div class="tl" style="left:491px;top:94px;color:#b9b9b9">Привязка</div>
<div class="tl" style="left:491px;top:110px;color:#b9b9b9">клавиш</div>
<div class="tl" style="left:589px;top:102px;color:#b9b9b9">Спектрограмма</div>
<div class="tl" style="left:687px;top:102px;color:#b9b9b9">Сеть</div>
<div class="tl" style="left:773px;top:102px;color:#b9b9b9">Ocen Ai</div>
<div class="tl" style="left:859px;top:102px;color:#b9b9b9">Плагины</div>
<div class="hd" style="left:334px;top:152px;width:128px">Микшерный сервер</div>
<div class="gb" style="left:331px;top:178px;width:672px;height:67px"></div>
<div class="cb" style="left:341px;top:189px;width:652px"><span style="letter-spacing:-0.18px">DirectSound</span></div>
<div class="ck" style="left:342px;top:220px"></div>
<div class="lb" style="left:364px;top:221px">Использовать только Full-Duplex устройства</div>
<div class="ck on" style="left:672px;top:220px"><svg width="12" height="12" viewBox="0 0 12 12"><path d="M2 6.2 L4.8 8.9 L10.2 3" fill="none" stroke="#333" stroke-width="1.7"/></svg></div>
<div class="lb" style="left:694px;top:221px"><span style="letter-spacing:-0.24px">Disable mixer when screen sleeps</span></div>
<div class="hd" style="left:334px;top:253px;width:245px">Устройство/параметры воспроизведения</div>
<div class="gb" style="left:331px;top:279px;width:672px;height:184px"></div>
<div class="cb" style="left:341px;top:290px;width:522px"><span style="letter-spacing:-0.09px">Первичный звуковой драйвер (2 channels)</span></div>
<div class="btn" style="left:873px;top:290px;width:32px"><svg width="14" height="11" viewBox="0 0 14 11" style="position:absolute;left:8px;top:5px"><rect x="0" y="0" width="6.3" height="4.6" rx="1.2" fill="#f4f4f4"/><rect x="7.7" y="0" width="6.3" height="4.6" rx="1.2" fill="#f4f4f4"/><rect x="0" y="6" width="6.3" height="4.6" rx="1.2" fill="#f4f4f4"/><rect x="7.7" y="6" width="6.3" height="4.6" rx="1.2" fill="#f4f4f4"/></svg></div>
<div class="btn" style="left:915px;top:290px;width:78px">Параметры</div>
<div class="ck" style="left:345px;top:321px"></div>
<div class="lb" style="left:367px;top:322px">Воспроизвести только видимую части аудио</div>
<div class="ck on" style="left:345px;top:345px"><svg width="12" height="12" viewBox="0 0 12 12"><path d="M2 6.2 L4.8 8.9 L10.2 3" fill="none" stroke="#333" stroke-width="1.7"/></svg></div>
<div class="lb" style="left:367px;top:346px">Scroll view to follow play head</div>
<div class="ck on" style="left:345px;top:369px"><svg width="12" height="12" viewBox="0 0 12 12"><path d="M2 6.2 L4.8 8.9 L10.2 3" fill="none" stroke="#333" stroke-width="1.7"/></svg></div>
<div class="lb" style="left:367px;top:370px"><span style="letter-spacing:-0.11px">Play head follows cursor and selections</span></div>
<div class="ck" style="left:345px;top:393px"></div>
<div class="lb" style="left:367px;top:394px"><span style="letter-spacing:-0.06px">Use play from start mode (space bar only / long press to stop)</span></div>
<div class="ck" style="left:622px;top:321px"></div>
<div class="lb" style="left:644px;top:322px">Переместить курсор в конец воспроизведения</div>
<div class="ck" style="left:622px;top:345px"></div>
<div class="lb" style="left:644px;top:346px">Приостановка воспроизведения на маркерах</div>
<div class="ck" style="left:622px;top:369px"></div>
<div class="lb" style="left:644px;top:370px">Продолжить воспроизведение следующего/выбранного аудио</div>
<div class="pill" style="left:340px;top:418px;width:654px;height:36px"></div>
<div class="lb" style="left:352px;top:430px"><span style="letter-spacing:-0.14px">Cut Preview Time</span></div>
<div class="fld" style="left:674px;top:423px;width:152px"><span class="ph">Before</span><span class="v">2&nbsp; s</span></div>
<div class="fld" style="left:837px;top:423px;width:152px"><span class="ph">After</span><span class="v">2&nbsp; s</span></div>
<div class="hd" style="left:334px;top:471px;width:186px">Устройства/параметры записи</div>
<div class="gb" style="left:331px;top:497px;width:672px;height:136px"></div>
<div class="cb" style="left:341px;top:508px;width:522px">По умолчанию</div>
<div class="btn" style="left:873px;top:508px;width:32px"><svg width="14" height="11" viewBox="0 0 14 11" style="position:absolute;left:8px;top:5px"><rect x="0" y="0" width="6.3" height="4.6" rx="1.2" fill="#f4f4f4"/><rect x="7.7" y="0" width="6.3" height="4.6" rx="1.2" fill="#f4f4f4"/><rect x="0" y="6" width="6.3" height="4.6" rx="1.2" fill="#f4f4f4"/><rect x="7.7" y="6" width="6.3" height="4.6" rx="1.2" fill="#f4f4f4"/></svg></div>
<div class="btn" style="left:915px;top:508px;width:78px">Параметры</div>
<div class="ck" style="left:345px;top:540px"></div>
<div class="lb" style="left:367px;top:541px">Переместить курсор в конец записи</div>
<div class="ck" style="left:345px;top:564px"></div>
<div class="lb" style="left:367px;top:565px">Выбрать записанное аудио</div>
<div class="ck" style="left:674px;top:540px"></div>
<div class="lb" style="left:696px;top:541px">Замена существующего звука (режим перезаписи)</div>
<div class="ck on" style="left:674px;top:564px"><svg width="12" height="12" viewBox="0 0 12 12"><path d="M2 6.2 L4.8 8.9 L10.2 3" fill="none" stroke="#333" stroke-width="1.7"/></svg></div>
<div class="lb" style="left:696px;top:565px"><span style="letter-spacing:-0.12px">Keep a backup for each recording</span></div>
<div class="pill" style="left:340px;top:588px;width:654px;height:36px"></div>
<div class="ck" style="left:354px;top:600px"></div>
<div class="lb" style="left:376px;top:600px"><span style="letter-spacing:-0.16px">Pre Roll Active</span></div>
<div class="fld" style="left:674px;top:593px;width:156px;height:25px;line-height:26px"><span class="ph">Roll Time</span><span class="v" style="color:#8a8a8a">0 s</span></div>
<div class="hd" style="left:334px;top:641px;width:198px">Частота дискретизации микшера</div>
<div class="gb" style="left:331px;top:667px;width:329px;height:44px"></div>
<div class="cb" style="left:341px;top:678px;width:309px"><span style="letter-spacing:-0.45px">System Sample Rate (44100 Hz)</span></div>
<div class="hd" style="left:677px;top:641px;width:99px">Размер буфера</div>
<div class="gb" style="left:673px;top:667px;width:330px;height:44px"></div>
<div class="cb" style="left:684px;top:678px;width:309px"><span style="letter-spacing:-0.22px">1024 сэмплов</span></div>
</body></html>
